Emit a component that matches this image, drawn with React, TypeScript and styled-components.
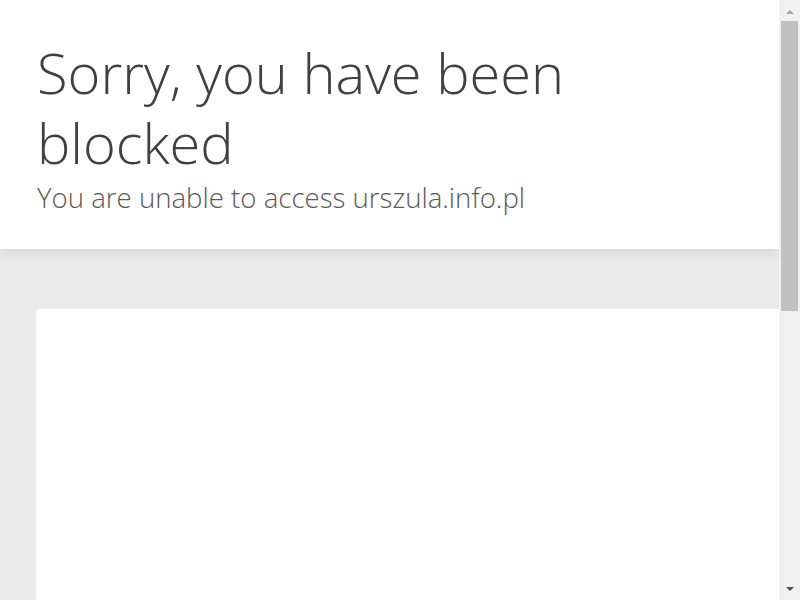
import React from "react";
import styled, { createGlobalStyle } from "styled-components";

const Global = createGlobalStyle`
  html, body {
    margin: 0;
    padding: 0;
  }
  body {
    background: #ebebeb;
    font-family: "Open Sans", "Noto Sans", sans-serif;
    color: #404040;
  }
`;

const Page = styled.div`
  display: flex;
  flex-direction: column;
  width: calc(100% - 21px);
  overflow-x: hidden;
  padding-bottom: 42px;
`;

const Header = styled.header`
  background: #ffffff;
  padding: 37px 36px 34px 37px;
  box-shadow: 0 2px 12px rgba(0, 0, 0, 0.12);
  position: relative;
  z-index: 1;
`;

const Title = styled.h1`
  margin: 0;
  font-weight: 300;
  font-size: 56px;
  line-height: 70px;
  color: #404040;
  max-width: 560px;
`;

const Subtitle = styled.h2`
  margin: 2px 0 0;
  font-weight: 300;
  font-size: 27.6px;
  line-height: 36px;
  color: #595959;
`;

const Body = styled.main`
  padding: 60px 0 0 36px;
`;

const Card = styled.section`
  background: #ffffff;
  border-radius: 3px 0 0 3px;
  min-height: 800px;
`;

const ScrollTrack = styled.div`
  position: fixed;
  top: 0;
  right: 0;
  bottom: 0;
  width: 21px;
  background: #f1f1f1;
  display: flex;
  flex-direction: column;
  align-items: center;
  z-index: 10;
`;

const Arrow = styled.div<{ $dir: "up" | "down"; $color: string }>`
  height: 17px;
  width: 100%;
  display: flex;
  align-items: center;
  justify-content: center;
  flex: none;
  &::before {
    content: "";
    width: 0;
    height: 0;
    border-left: 4.5px solid transparent;
    border-right: 4.5px solid transparent;
    ${(p) =>
      p.$dir === "up"
        ? `border-bottom: 4.5px solid ${p.$color}; margin-top: 6px;`
        : `border-top: 4.5px solid ${p.$color}; margin-bottom: 6px;`}
  }
`;

const ThumbArea = styled.div`
  flex: 1;
  width: 100%;
  padding: 4px 2px 0;
  box-sizing: border-box;
`;

const Thumb = styled.div`
  height: 290px;
  background: #c1c1c1;
`;

export default function App() {
  return (
    <>
      <Global />
      <Page>
        <Header>
          <Title>Sorry, you have been blocked</Title>
          <Subtitle>You are unable to access urszula.info.pl</Subtitle>
        </Header>
        <Body>
          <Card />
        </Body>
      </Page>
      <ScrollTrack aria-hidden>
        <Arrow $dir="up" $color="#a3a3a3" />
        <ThumbArea>
          <Thumb />
        </ThumbArea>
        <Arrow $dir="down" $color="#505050" />
      </ScrollTrack>
    </>
  );
}
